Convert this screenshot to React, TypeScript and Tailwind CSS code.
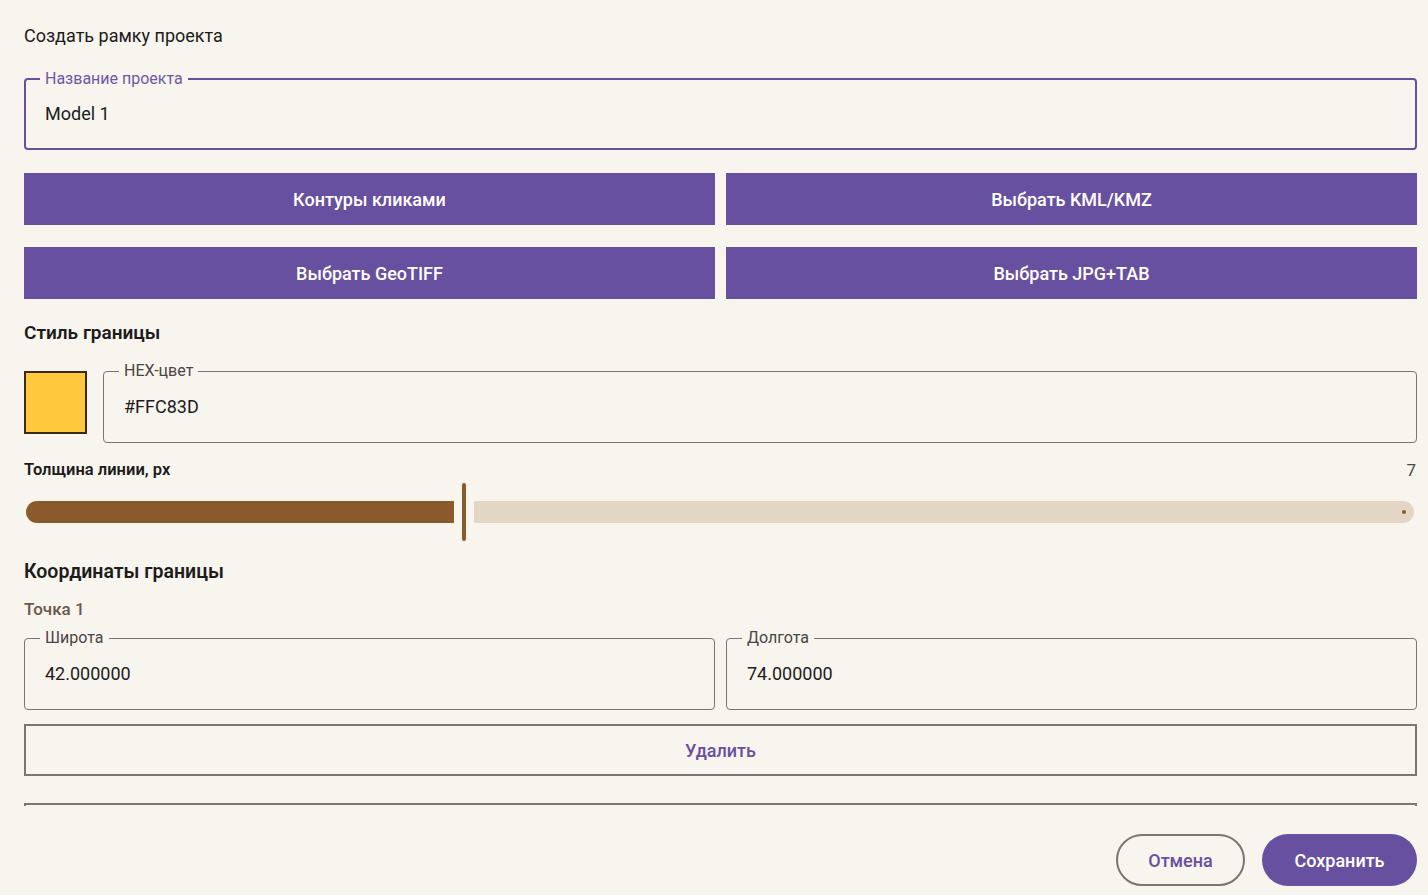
import React from "react";

const BG = "bg-[#f8f4ee]";

function OutlinedField({
  label,
  value,
  focused = false,
  className = "",
}: {
  label: string;
  value: string;
  focused?: boolean;
  className?: string;
}) {
  return (
    <div
      className={
        "relative h-[72px] rounded-[4px] flex items-center " +
        (focused ? "border-2 border-[#67509f] pl-[19px] " : "border border-[#7b7674] pl-[20px] ") +
        className
      }
    >
      <span
        className={
          "absolute -top-[10px] px-[5px] text-[16px] leading-[18px] " +
          BG +
          (focused ? " left-[14px] text-[#6d5aa3]" : " left-[15px] text-[#4a4645]")
        }
      >
        {label}
      </span>
      <span className="text-[18px] leading-[24px] text-[#1d1b1b]">{value}</span>
    </div>
  );
}

function FilledButton({ children }: { children: React.ReactNode }) {
  return (
    <button className="h-[52px] bg-[#67509f] text-white text-[18px] font-medium flex items-center justify-center">
      {children}
    </button>
  );
}

export default function App() {
  return (
    <div
      className={"min-h-screen w-full text-[#1d1b1b] " + BG}
      style={{ fontFamily: "Roboto, 'Noto Sans', sans-serif" }}
    >
      <div className="pl-[24px] pr-[11px] pt-[24px]">
        <h2 className="text-[18px] leading-[24px]">Создать рамку проекта</h2>

        <OutlinedField label="Название проекта" value="Model 1" focused className="mt-[30px]" />

        <div className="grid grid-cols-2 gap-x-[11px] gap-y-[22px] mt-[23px]">
          <FilledButton>Контуры кликами</FilledButton>
          <FilledButton>Выбрать KML/KMZ</FilledButton>
          <FilledButton>Выбрать GeoTIFF</FilledButton>
          <FilledButton>Выбрать JPG+TAB</FilledButton>
        </div>

        <h3 className="mt-[22px] text-[19px] leading-[24px] font-semibold">Стиль границы</h3>

        <div className="mt-[26px] flex items-start gap-[16px]">
          <div className="w-[63px] h-[63px] bg-[#ffc83d] border-2 border-[#3b2a1a] shrink-0" />
          <OutlinedField label="HEX-цвет" value="#FFC83D" className="flex-1" />
        </div>

        <div className="mt-[17px] flex items-center justify-between">
          <span className="text-[16.5px] leading-[20px] font-semibold">Толщина линии, px</span>
          <span className="text-[17px] leading-[20px] text-[#4a4645] pr-[1px]">7</span>
        </div>

        <div className="mt-[3px] h-[58px] flex items-center pl-[2px] pr-[3px]">
          <div className="w-[428px] h-[22px] bg-[#8b5a2b] rounded-l-full rounded-r-[3px]" />
          <div className="ml-[8px] w-[4px] h-[58px] rounded-full bg-[#8b5a2b]" />
          <div className="ml-[8px] flex-1 h-[22px] bg-[#e4d6c4] rounded-l-[3px] rounded-r-full flex items-center justify-end pr-[8px]">
            <div className="w-[4px] h-[4px] rounded-full bg-[#8b5a2b]" />
          </div>
        </div>

        <h3 className="mt-[19px] text-[19.5px] leading-[24px] font-semibold">Координаты границы</h3>
        <p className="mt-[15px] text-[17px] leading-[20px] font-medium text-[#6b5849]">Точка 1</p>

        <div className="mt-[19px] grid grid-cols-2 gap-x-[11px]">
          <OutlinedField label="Широта" value="42.000000" />
          <OutlinedField label="Долгота" value="74.000000" />
        </div>

        <button className="mt-[14px] w-full h-[52px] border-2 border-[#7b7674] text-[#67509f] text-[18px] font-medium flex items-center justify-center">
          Удалить
        </button>

        <div className="mt-[27px] h-[3px] border-t-2 border-x-2 border-[#7b7674]" />

        <div className="mt-[28px] flex justify-end gap-[17px]">
          <button className="h-[52px] w-[129px] rounded-full border-2 border-[#7b7674] text-[#67509f] text-[18px] font-medium">
            Отмена
          </button>
          <button className="h-[52px] w-[155px] rounded-full bg-[#67509f] text-white text-[18px] font-medium">
            Сохранить
          </button>
        </div>
      </div>
    </div>
  );
}
